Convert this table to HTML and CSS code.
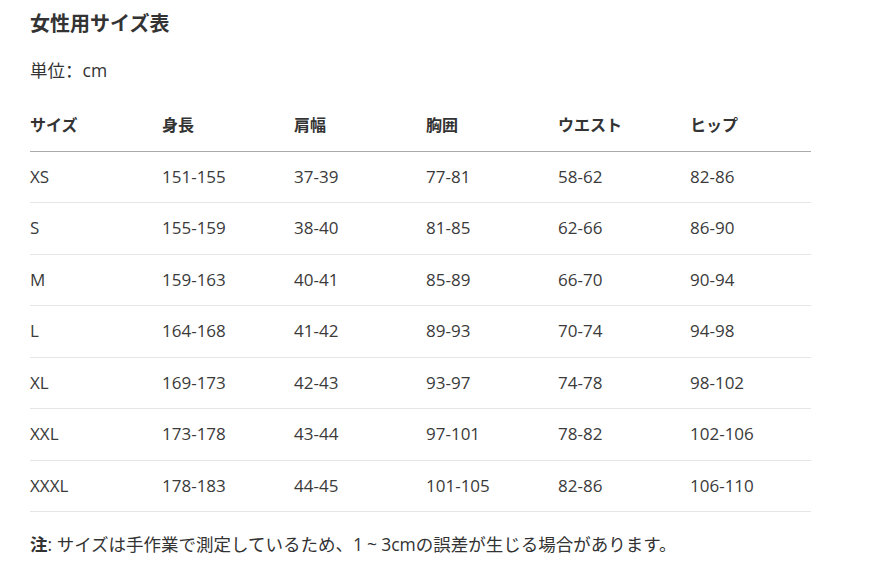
FILE: index.html
```html
<!DOCTYPE html>
<html lang="ja">
<head>
<meta charset="utf-8">
<link rel="stylesheet" href="styles.css">
</head>
<body>
<div class="page">
  <h2 class="title">女性用サイズ表</h2>
  <p class="unit">単位<span class="colon" lang="zh-CN">：</span>cm</p>
  <table class="sizes">
    <colgroup>
      <col class="c"><col class="c"><col class="c"><col class="c"><col class="c"><col class="last">
    </colgroup>
    <thead>
      <tr><th>サイズ</th><th>身長</th><th>肩幅</th><th>胸囲</th><th>ウエスト</th><th>ヒップ</th></tr>
    </thead>
    <tbody>
      <tr><td>XS</td><td>151-155</td><td>37-39</td><td>77-81</td><td>58-62</td><td>82-86</td></tr>
      <tr><td>S</td><td>155-159</td><td>38-40</td><td>81-85</td><td>62-66</td><td>86-90</td></tr>
      <tr><td>M</td><td>159-163</td><td>40-41</td><td>85-89</td><td>66-70</td><td>90-94</td></tr>
      <tr><td>L</td><td>164-168</td><td>41-42</td><td>89-93</td><td>70-74</td><td>94-98</td></tr>
      <tr><td>XL</td><td>169-173</td><td>42-43</td><td>93-97</td><td>74-78</td><td>98-102</td></tr>
      <tr><td>XXL</td><td>173-178</td><td>43-44</td><td>97-101</td><td>78-82</td><td>102-106</td></tr>
      <tr><td>XXXL</td><td>178-183</td><td>44-45</td><td>101-105</td><td>82-86</td><td>106-110</td></tr>
    </tbody>
  </table>
  <p class="note"><strong>注</strong>: サイズは手作業で測定しているため、1<span class="tilde">~</span>3cmの誤差が生じる場合があります。</p>
</div>
</body>
</html>
```

FILE: styles.css
```css
html, body {
  margin: 0;
  padding: 0;
  background: #fff;
}
body {
  font-family: "Open Sans", "Noto Sans CJK JP", sans-serif;
  color: #333;
  font-size: 17px;
}
.page {
  padding: 10px 0 0 30px;
  width: 781px;
}
.title {
  margin: 0;
  font-size: 20px;
  font-weight: bold;
  line-height: 28px;
}
.unit {
  margin: 20px 0 0;
  line-height: 24px;
  font-size: 17.5px;
}
.unit .colon {
  font-family: "Noto Sans CJK SC", sans-serif;
}
.sizes {
  margin-top: 18px;
  width: 781px;
  border-collapse: collapse;
  table-layout: fixed;
}
.sizes col.c {
  width: 132px;
}
.sizes col.last {
  width: 121px;
}
.sizes th, .sizes td {
  text-align: left;
  padding: 0;
  height: 50.5px;
  line-height: 24px;
  vertical-align: middle;
}
.sizes th {
  font-size: 16px;
  font-weight: bold;
  border-bottom: 1px solid #aaa;
}
.sizes td {
  color: #3a3a3a;
  border-bottom: 1px solid #e6e6e6;
}
.note {
  margin: 20px 0 0;
  line-height: 24px;
  font-size: 17.5px;
}
.note strong {
  font-weight: bold;
}
.note .tilde {
  padding: 0 4px;
}
```
